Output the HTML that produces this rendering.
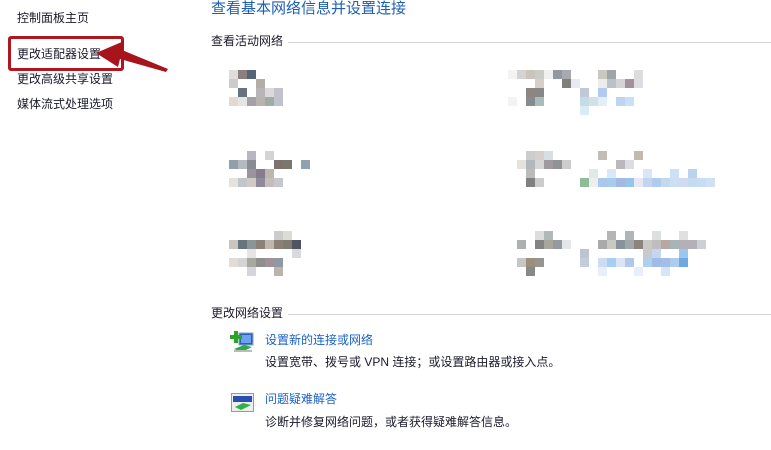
<!DOCTYPE html>
<html><head><meta charset="utf-8">
<style>
body{margin:0;width:771px;height:450px;background:#fff;position:relative;overflow:hidden;font-family:"Liberation Sans","Microsoft YaHei","Noto Sans CJK SC",sans-serif;}
.t{position:absolute;white-space:nowrap;font-size:12px;line-height:14px;color:#1a1a2a;}
.b{position:absolute;width:9px;height:9px;}
.ln{position:absolute;height:1px;background:#d4d4d4;}
.lk{color:#1c62c4;}
</style></head><body>
<div class="t" style="left:17px;top:11px;">控制面板主页</div>
<div class="t" style="left:17px;top:47px;">更改适配器设置</div>
<div class="t" style="left:17px;top:72px;">更改高级共享设置</div>
<div class="t" style="left:17px;top:97px;">媒体流式处理选项</div>
<div style="position:absolute;left:8px;top:36px;width:110px;height:29px;border:3px solid #b0161f;border-radius:3px;"></div>
<svg style="position:absolute;left:0;top:0" width="200" height="100"><polygon points="96,53 124,41 122,50 168,69 166,72 120,59 118,67" fill="#a8141c"/></svg>
<div class="t" style="left:211px;top:0px;font-size:15px;line-height:18px;color:#1e5fb4;">查看基本网络信息并设置连接</div>
<div class="t" style="left:211px;top:34px;">查看活动网络</div>
<div class="ln" style="left:288px;top:42px;width:483px;"></div>
<div class="t" style="left:211px;top:306px;">更改网络设置</div>
<div class="ln" style="left:288px;top:314px;width:483px;"></div>
<svg style="position:absolute;left:230px;top:331px" width="26" height="24">
<rect x="9" y="2" width="14" height="12" fill="#2a5fc8" stroke="#8aa" stroke-width="1"/>
<rect x="11" y="4" width="10" height="8" fill="#6fa0f0"/>
<rect x="4" y="0" width="4" height="12" fill="#2aa52a"/><rect x="0" y="4" width="12" height="4" fill="#2aa52a"/>
<polygon points="4,18 14,14 22,16 12,21" fill="#2eaa4a"/><rect x="4" y="19" width="18" height="2" fill="#bbb"/>
</svg>
<svg style="position:absolute;left:231px;top:393px" width="24" height="20">
<rect x="0.5" y="0.5" width="22" height="18" fill="#eee" stroke="#999"/>
<rect x="2" y="3" width="19" height="6" fill="#2a4fb0"/>
<polygon points="4,14 12,10 20,12 10,17" fill="#2eb04a"/>
</svg>
<div class="t lk" style="left:265px;top:333px;">设置新的连接或网络</div>
<div class="t" style="left:265px;top:355px;">设置宽带、拨号或 VPN 连接；或设置路由器或接入点。</div>
<div class="t lk" style="left:265px;top:392px;">问题疑难解答</div>
<div class="t" style="left:265px;top:415px;">诊断并修复网络问题，或者获得疑难解答信息。</div>
<div id="px"></div>
<script>
var D=[
[229,70,[[0,'#e3dcdc',1,'#8c7f80',2,'#556577'],[0,'#ccc',3,'#b5aca6'],[1,'#667480',3,'#b8b4b8',4,'#ddd8db',5,'#c3c1c9'],[0,'#e3d8d2',1,'#e5e5e5',2,'#a4a1a6',3,'#b8b3ae',4,'#a0aba6',5,'#bcc3cc']]],
[229,151,[[2,'#b8b6c0',4,'#d4d4d4'],[0,'#909fab',1,'#b3b9bf',2,'#8a8c94',5,'#7c746c',6,'#7a786c',8,'#8fa1af'],[2,'#9a949f',3,'#867d8a',4,'#bcb5b0'],[0,'#e5e1dc',1,'#c4c5cc',2,'#d0ccc4',3,'#908a9c',4,'#c4bdb9',5,'#c6c8cd']]],
[229,231,[[5,'#ccc',6,'#dcdcd6'],[0,'#c9c6c1',1,'#667480',2,'#8a9696',3,'#8c8178',4,'#bfb6ae',5,'#8a8074',6,'#7f7b70',7,'#4f5460'],[2,'#e5e5e5',7,'#d9d9e0'],[0,'#e3dbd8',1,'#d5d5d5',2,'#a8a89e',3,'#8e8e8c',4,'#a09098',5,'#9198a2'],[2,'#d5d5dd',5,'#b8b5ae']]],
[508,70,[[0,'#f3f3f3',1,'#d3d3d3',2,'#cdc3bd',3,'#c9cdc6',4,'#f0f0f0',5,'#9198a0',6,'#a9a8b1',10,'#c8c7c0',11,'#9ea5a6',14,'#dcdcdc'],[3,'#d9cdca',6,'#7f807c',7,'#e9e9f2',10,'#ececec',11,'#bcc0ca',12,'#d4d4d4',13,'#a48f9c',14,'#dcdce2'],[2,'#8e8580',3,'#878787',8,'#c1c8d6',10,'#b0cbef'],[0,'#f3f3f3',2,'#838c90',3,'#aabbbb',8,'#c3dce6',9,'#d2e0ea',10,'#e3eef9',12,'#c0d3ef',13,'#c7e2f7'],[8,'#d9ecf6']]],
[508,151,[[2,'#ccc',3,'#d5d0cd',4,'#d5e0e3',10,'#c4bdb6',14,'#c3b9ac'],[1,'#e5e1dc',2,'#b3b8bc',3,'#d6d6d6',4,'#a09a9e',5,'#8e9396',6,'#cdcdcd',12,'#bcb6bd',13,'#dcdce2'],[2,'#bbb',9,'#e0e9e6',11,'#d7e8f7',15,'#dbe7f8',18,'#cce0f8',20,'#bcd2ef'],[2,'#808080',3,'#ccc',8,'#8ebc98',9,'#eee',10,'#a8c8ec',11,'#a8ccee',12,'#a4b8e4',13,'#98c4ec',14,'#e8e8f4',15,'#c4d4f0',16,'#b0ccec',17,'#c4d8f0',18,'#cce0f4',19,'#d0daf0',20,'#c4dcf0',21,'#c8dcf4',22,'#d0e0f4']]],
[508,231,[[3,'#ddd',4,'#b0b8b8',11,'#b5b5b5',13,'#b0b5b8',16,'#dde0e0',19,'#e0e0e0'],[1,'#adb1b0',3,'#838383',4,'#a9a59c',5,'#939aa0',6,'#e6e6ea',10,'#aaa',11,'#c9c9c2',12,'#87929a',13,'#a0a6aa',14,'#8b847c',15,'#c9c9c9',16,'#bebebe',17,'#baa8a0',18,'#a8b4b8',19,'#b4b0b8',20,'#b4b0b8',21,'#ccd0d6'],[8,'#bcc4d2',15,'#c9c9c9',16,'#c4d6f0',19,'#98c8f0'],[1,'#c6c6c2',2,'#9c8e7e',3,'#969690',8,'#c3ccd8',10,'#cbdcf4',11,'#a5d0f0',12,'#dae4f4',13,'#b0c8ec',15,'#b0d0f0',16,'#a0bce4',17,'#a4bce8',18,'#b0ccec',19,'#70a8e0'],[2,'#888',10,'#e8eefa',14,'#e8eefa',17,'#d8e4f8']]]
];
var h='';D.forEach(function(g){g[2].forEach(function(r,ri){for(var i=0;i<r.length;i+=2){h+='<div class="b" style="left:'+(g[0]+r[i]*9)+'px;top:'+(g[1]+ri*9)+'px;background:'+r[i+1]+'"></div>';}});});
document.getElementById('px').innerHTML=h;
</script>
</body></html>
